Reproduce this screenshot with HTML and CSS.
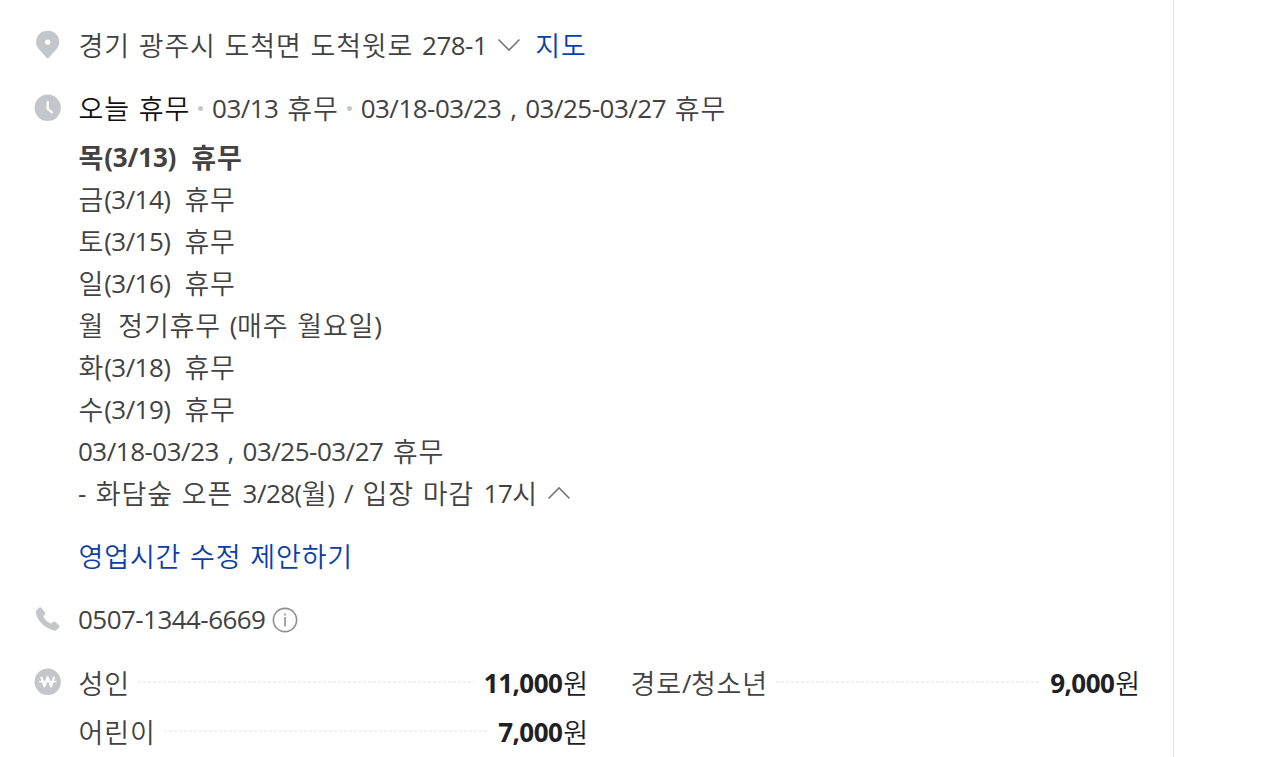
FILE: index.html
```html
<!DOCTYPE html>
<html lang="ko">
<head>
<meta charset="utf-8">
<title>화담숲</title>
<link rel="stylesheet" href="styles.css">
</head>
<body>
<main class="place">
  <section class="row">
    <svg class="icon" viewBox="0 0 28 42"><path fill="#c5c6c9" fill-rule="evenodd" d="M13.700 5.800c6.500 0 11.600 4.800 11.600 11.100 0 3.300-1.400 5.500-3.600 8L14.600 33q-.9.8-1.800 0L5.700 24.900c-2.200-2.500-3.600-4.700-3.600-8C2.100 10.600 7.200 5.800 13.700 5.800zM13.700 14.400a2.700 2.700 0 1 0 0 5.400 2.700 2.700 0 0 0 0-5.400z"/></svg>
    <div class="line"><span class="k">경기 광주시 도척면 도척윗로</span> 278-1<svg class="chev" viewBox="0 0 24 14"><path d="M1.500 1.500 12 12 22.500 1.500"/></svg><a class="k link map">지도</a></div>
  </section>
  <section class="row">
    <svg class="icon" viewBox="0 0 28 42"><circle cx="13.700" cy="19.800" r="13.200" fill="#c5c6c9"/><path d="M13.700 14v6.800l4.200 3.600" fill="none" stroke="#fff" stroke-width="2.300" stroke-linecap="round"/></svg>
    <div class="hours">
      <div class="line"><span class="k now">오늘 휴무</span><i class="dot"></i>03/13 <span class="k">휴무</span><i class="dot"></i><span class="dates">03/18-03/23 , 03/25-03/27 <span class="k">휴무</span></span></div>
      <div class="days">
        <div class="line today"><span class="k">목</span>(3/13)<span class="k state">휴무</span></div>
        <div class="line"><span class="k">금</span>(3/14)<span class="k state">휴무</span></div>
        <div class="line"><span class="k">토</span>(3/15)<span class="k state">휴무</span></div>
        <div class="line"><span class="k">일</span>(3/16)<span class="k state">휴무</span></div>
        <div class="line"><span class="k">월</span><span class="k state">정기휴무</span> (<span class="k">매주 월요일</span>)</div>
        <div class="line"><span class="k">화</span>(3/18)<span class="k state">휴무</span></div>
        <div class="line"><span class="k">수</span>(3/19)<span class="k state">휴무</span></div>
        <div class="line dates">03/18-03/23 , 03/25-03/27 <span class="k">휴무</span></div>
        <div class="line note">- <span class="k">화담숲 오픈</span> 3/28(<span class="k">월</span>) / <span class="k">입장 마감</span> 17<span class="k">시</span><svg class="chev" viewBox="0 0 24 14"><path d="M1.500 12.500 12 2 22.500 12.500"/></svg></div>
      </div>
      <div class="line suggest"><a class="k link">영업시간 수정 제안하기</a></div>
    </div>
  </section>
  <section class="row">
    <svg class="icon" viewBox="0 0 28 42"><path fill="#c5c6c9" d="M2.300 11.800 5.300 8.600Q6.300 7.800 7.300 8.700L11 13.200Q11.700 14.200 11 15.200L9.300 17.500Q11.500 22 17 24.600L19.400 22.800Q20.300 22.200 21.300 22.900L25.200 26.300Q26.200 27.300 25.300 28.300L23 30.700Q21.700 32 19.700 31.500C10.500 28.800 3.600 22 1.900 14Q1.600 12.700 2.300 11.800z"/></svg>
    <div class="line">0507-1344-6669<svg class="info" viewBox="0 0 26 26"><circle cx="13" cy="13" r="11.600"/><path d="M13 10v9.500M13 6.500v2"/></svg></div>
  </section>
  <section class="row">
    <svg class="icon" viewBox="0 0 28 42"><circle cx="13.700" cy="19.800" r="13.200" fill="#c5c6c9"/><path d="m7.200 14.800 3.200 9.600 3.300-9.200 3.300 9.200 3.200-9.600" fill="none" stroke="#fff" stroke-width="2.100" stroke-linejoin="round"/><path d="M5 19.600h17.400" stroke="#fff" stroke-width="1.500"/></svg>
    <div class="prices">
      <div class="line price"><span class="k">성인</span><i class="rule"></i><span class="won"><b>11,000</b><span class="k">원</span></span></div>
      <div class="line price"><span class="slash"><span class="k">경로</span>/<span class="k">청소년</span></span><i class="rule"></i><span class="won"><b>9,000</b><span class="k">원</span></span></div>
      <div class="line price"><span class="k">어린이</span><i class="rule"></i><span class="won"><b>7,000</b><span class="k">원</span></span></div>
    </div>
  </section>
</main>
</body>
</html>
```
FILE: styles.css
```css
* { box-sizing: border-box; }
body { margin: 0; background: #fff; overflow: hidden; }
.place {
  display: flex;
  flex-direction: column;
  gap: 21px;
  width: 1174px;
  height: 757px;
  padding: 24px 30px 0 34px;
  border-right: 1px solid #e5e5e5;
  color: #424242;
  font-family: "Open Sans", "Noto Sans CJK KR", sans-serif;
  font-size: 26px;
  font-weight: 370;
  letter-spacing: -0.55px;
  word-spacing: 2.7px;
}
.row { display: flex; flex: none; }
.icon { flex: none; width: 28px; height: 42px; margin: 1px 16px -1px 0; }
.line { height: 42px; line-height: 42px; white-space: nowrap; }
.k {
  font-family: "Noto Sans CJK KR", sans-serif;
  font-size: 27px;
  font-weight: 350;
  line-height: 1;
  letter-spacing: 0.85px;
  word-spacing: 0.4px;
  vertical-align: -1px;
}
.line > .k:first-child { padding-left: 0.5px; }
.link { color: #0b3fa8; }
.map { margin-left: 14px; }
.now { color: #111; }
.chev { width: 24px; height: 14px; margin-left: 10px; vertical-align: 3px; fill: none; stroke: #777; stroke-width: 1.6; }
.dot { display: inline-block; width: 5px; height: 5px; margin: 0 9px 0 8px; border-radius: 50%; background: #c5c6c9; vertical-align: 7px; }
.dates { letter-spacing: -0.5px; word-spacing: 2.5px; }
.days { margin-top: 7px; }
.state { margin-left: 14px; }
.today, .today .k { font-weight: 700; }
.today { letter-spacing: -0.15px; }
.today .state { margin-left: 15px; }
.note { word-spacing: 3.3px; }
.note .chev { margin-left: 9px; }
.suggest { margin-top: 21px; }
.info { width: 26px; height: 26px; margin-left: 7px; vertical-align: -4px; fill: none; stroke: #8f8f8f; stroke-width: 1.6; }
.prices { display: grid; grid-template-columns: 511px 511px; column-gap: 41px; row-gap: 7px; }
.price { display: flex; }
.price .k { line-height: 40px; }
.price > .k { line-height: 43px; }
.slash, .won { padding-top: 1px; }
.slash { padding-left: 0.5px; }
.rule {
  flex: 1;
  height: 2px;
  margin: 20px 10px 0 8px;
  background: repeating-linear-gradient(90deg, #f1f1f1 0 3px, #fff 3px 5px);
}
.won { color: #202124; }
.won b { font-weight: 700; }
.won .k { margin-left: 1px; }
```
